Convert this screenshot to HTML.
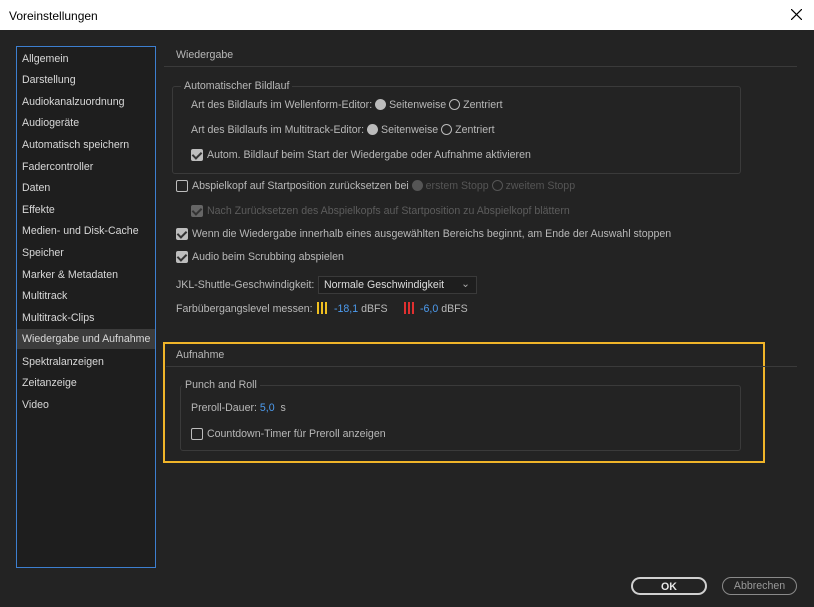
<!DOCTYPE html>
<html><head><style>
*{box-sizing:border-box;margin:0;padding:0}
body{width:814px;height:607px;background:#232323;font-family:"Liberation Sans",sans-serif;font-size:10.6px;color:#b8b8b8;position:relative;overflow:hidden}
.a{position:absolute;white-space:nowrap}
.title{left:0;top:0;width:814px;height:30px;background:#fff;color:#000;font-size:12px;padding:9px 0 0 9px}
.side{left:16px;top:46px;width:140px;height:522px;border:1px solid #3d7fd0;background:#1e1e1e}
.item{position:absolute;left:5px;color:#d8d8d8}
.sel{left:0;width:138px;background:#3c3c3c;height:20px;padding:4px 0 0 5px}
.line{height:1px;background:#3a3a3a}
.box{border:1px solid #3a3a3a;border-radius:3px}
.rad{display:inline-block;width:11px;height:11px;border-radius:50%;vertical-align:-2px;margin-right:3px}
.cb{position:absolute;width:12px;height:12px;border-radius:2px}
.cb.on{background:#bdbdbd}
.cb.on::after{content:"";position:absolute;left:3px;top:1px;width:4px;height:7px;border:solid #333;border-width:0 2px 2px 0;transform:rotate(45deg)}
.cb.off{border:1px solid #bdbdbd}
.blue{color:#4d9cf0}
.btn{position:absolute;height:18px;border-radius:9px;text-align:center;padding-top:2px}
</style></head><body>
<div class="a title">Voreinstellungen</div>
<svg class="a" style="right:12px;top:9px" width="11" height="11"><path d="M0 0L11 11M11 0L0 11" stroke="#000" stroke-width="1.2"/></svg>
<div class="a side">
<div class="item" style="top:6px">Allgemein</div>
<div class="item" style="top:27px">Darstellung</div>
<div class="item" style="top:49px">Audiokanalzuordnung</div>
<div class="item" style="top:70px">Audiogeräte</div>
<div class="item" style="top:92px">Automatisch speichern</div>
<div class="item" style="top:114px">Fadercontroller</div>
<div class="item" style="top:135px">Daten</div>
<div class="item" style="top:157px">Effekte</div>
<div class="item" style="top:178px">Medien- und Disk-Cache</div>
<div class="item" style="top:200px">Speicher</div>
<div class="item" style="top:222px">Marker &amp; Metadaten</div>
<div class="item" style="top:243px">Multitrack</div>
<div class="item" style="top:265px">Multitrack-Clips</div>
<div class="item sel" style="top:282px">Wiedergabe und Aufnahme</div>
<div class="item" style="top:309px">Spektralanzeigen</div>
<div class="item" style="top:330px">Zeitanzeige</div>
<div class="item" style="top:352px">Video</div>
</div>

<div class="a" style="left:176px;top:49px">Wiedergabe</div>
<div class="a line" style="left:164px;top:66px;width:633px"></div>
<div class="a box" style="left:172px;top:86px;width:569px;height:88px"></div>
<div class="a" style="left:181px;top:80px;background:#232323;padding:0 3px">Automatischer Bildlauf</div>
<div class="a" style="left:191px;top:99px">Art des Bildlaufs im Wellenform-Editor: <span class="rad" style="background:#bbb"></span>Seitenweise <span class="rad" style="border:1px solid #bbb"></span>Zentriert</div>
<div class="a" style="left:191px;top:124px">Art des Bildlaufs im Multitrack-Editor: <span class="rad" style="background:#bbb"></span>Seitenweise <span class="rad" style="border:1px solid #bbb"></span>Zentriert</div>
<div class="cb on" style="left:191px;top:149px"></div>
<div class="a" style="left:207px;top:149px">Autom. Bildlauf beim Start der Wiedergabe oder Aufnahme aktivieren</div>
<div class="cb off" style="left:176px;top:180px"></div>
<div class="a" style="left:192px;top:180px">Abspielkopf auf Startposition zurücksetzen bei <span style="color:#555"><span class="rad" style="background:#555"></span>erstem Stopp <span class="rad" style="border:1px solid #555"></span>zweitem Stopp</span></div>
<div class="cb on" style="left:191px;top:205px;background:#666"></div>
<div class="a" style="left:207px;top:205px;color:#5c5c5c">Nach Zurücksetzen des Abspielkopfs auf Startposition zu Abspielkopf blättern</div>
<div class="cb on" style="left:176px;top:228px"></div>
<div class="a" style="left:192px;top:228px">Wenn die Wiedergabe innerhalb eines ausgewählten Bereichs beginnt, am Ende der Auswahl stoppen</div>
<div class="cb on" style="left:176px;top:251px"></div>
<div class="a" style="left:192px;top:251px">Audio beim Scrubbing abspielen</div>
<div class="a" style="left:176px;top:279px">JKL-Shuttle-Geschwindigkeit:</div>
<div class="a" style="left:318px;top:276px;width:159px;height:18px;border:1px solid #3a3a3a;background:#1e1e1e;color:#ddd;padding:2px 0 0 5px">Normale Geschwindigkeit<span style="position:absolute;right:6px;top:1px;color:#aaa">⌄</span></div>
<div class="a" style="left:176px;top:303px">Farbübergangslevel messen:</div>
<div class="a" style="left:317px;top:302px;width:10px;height:12px;background:repeating-linear-gradient(90deg,#f0c020 0 2px,#232323 2px 4px)"></div>
<div class="a blue" style="left:334px;top:303px">-18,1 <span style="color:#b8b8b8">dBFS</span></div>
<div class="a" style="left:404px;top:302px;width:10px;height:12px;background:repeating-linear-gradient(90deg,#e03030 0 2px,#232323 2px 4px)"></div>
<div class="a blue" style="left:420px;top:303px">-6,0 <span style="color:#b8b8b8">dBFS</span></div>

<div class="a" style="left:163px;top:342px;width:602px;height:121px;border:2px solid #f0b429"></div>
<div class="a" style="left:176px;top:349px">Aufnahme</div>
<div class="a line" style="left:166px;top:366px;width:631px"></div>
<div class="a box" style="left:180px;top:385px;width:561px;height:66px"></div>
<div class="a" style="left:182px;top:379px;background:#232323;padding:0 3px">Punch and Roll</div>
<div class="a" style="left:191px;top:402px">Preroll-Dauer: <span class="blue">5,0</span> &nbsp;s</div>
<div class="cb off" style="left:191px;top:428px"></div>
<div class="a" style="left:207px;top:428px">Countdown-Timer für Preroll anzeigen</div>

<div class="btn" style="left:631px;top:577px;width:76px;border:2px solid #d0d0d0;color:#e8e8e8;font-weight:bold">OK</div>
<div class="btn" style="left:722px;top:577px;width:75px;border:1px solid #8a8a8a;color:#999">Abbrechen</div>
</body></html>
